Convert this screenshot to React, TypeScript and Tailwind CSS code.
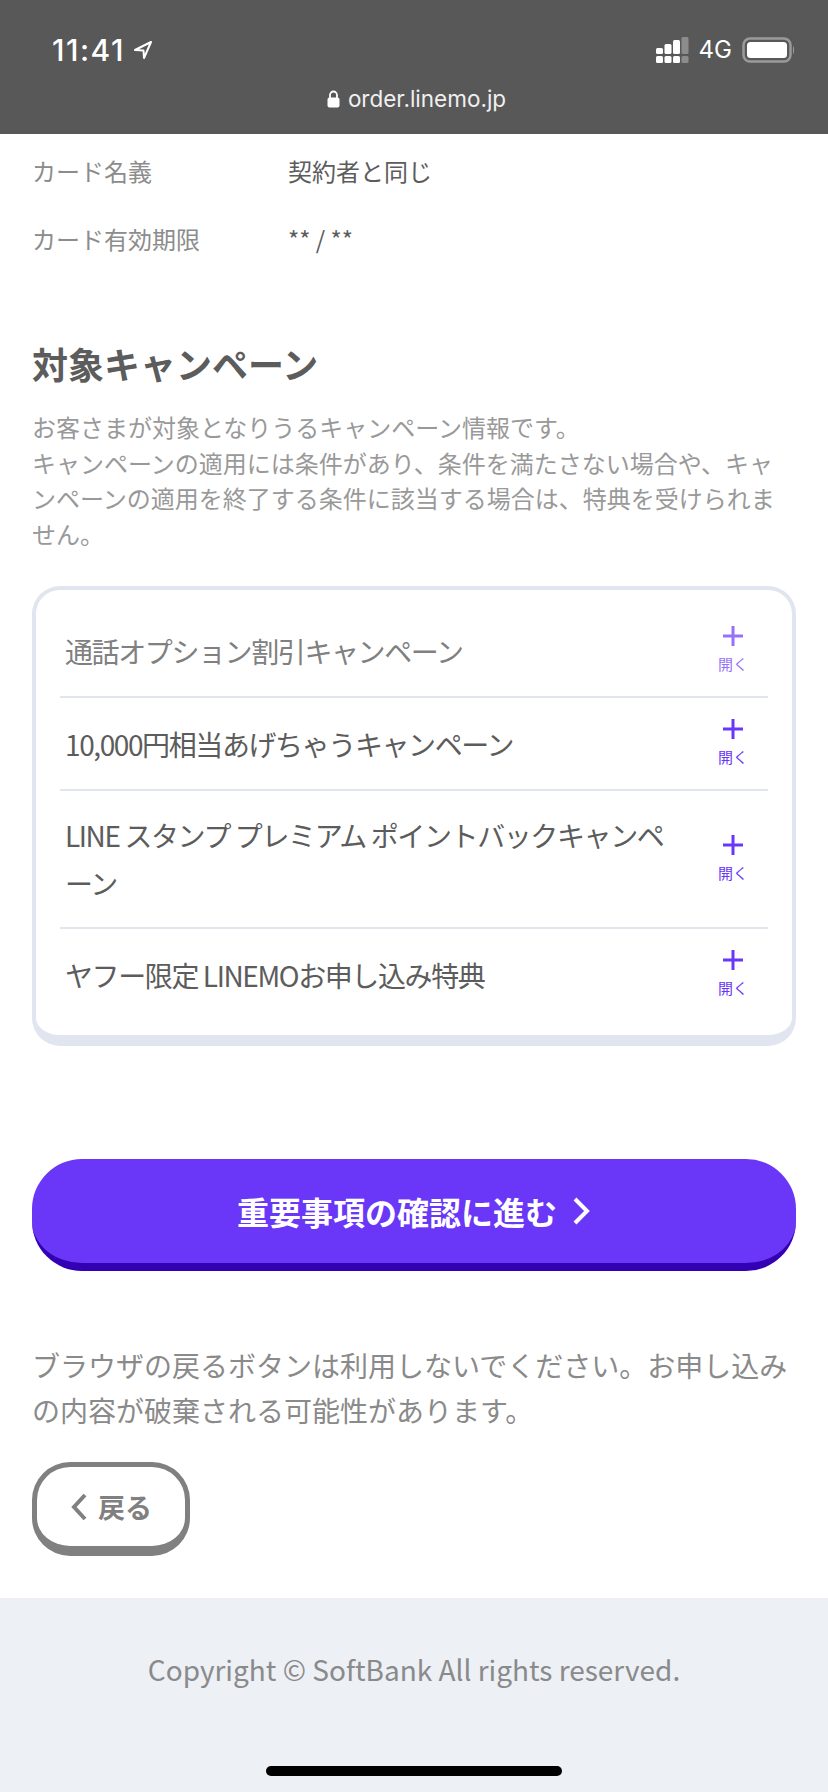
const font = "font-['Noto_Sans_CJK_JP','Noto_Sans',sans-serif]";

const campaigns = [
  { id: 1, name: "通話オプション割引キャンペーン", faded: true },
  { id: 2, name: "10,000円相当あげちゃうキャンペーン" },
  { id: 3, name: "LINE スタンプ プレミアム ポイントバックキャンペーン" },
  { id: 4, name: "ヤフー限定 LINEMOお申し込み特典" },
];

function StatusBar() {
  return (
    <div className="bg-[#585858] h-[134px] text-white flex flex-col">
      <div className="flex items-center justify-between pt-[33px] pl-[52px] pr-[33px] h-[66px]">
        <div className="flex items-center gap-[8px]">
          <span className="font-['Inter',sans-serif] text-[30px] font-medium leading-[34px] tracking-[1.5px]">11:41</span>
          <svg width="20" height="20" viewBox="0 0 20 20" fill="none" stroke="white" strokeWidth="2" strokeLinejoin="round">
            <path d="M18 2 L2 10 L10.5 10.5 L11 18 Z" />
          </svg>
        </div>
        <div className="flex items-center gap-[10px]">
          <svg width="33" height="26" viewBox="0 0 33 26" fill="white">
            <rect x="0" y="11" width="7" height="6" rx="1.5" />
            <rect x="8.5" y="7" width="7" height="10" rx="1.5" />
            <rect x="17" y="3" width="7" height="14" rx="1.5" />
            <rect x="25.5" y="0" width="7" height="17" rx="1.5" fill="#8c8c8c" />
            <rect x="0" y="19" width="7" height="7" rx="1.5" />
            <rect x="8.5" y="19" width="7" height="7" rx="1.5" />
            <rect x="17" y="19" width="7" height="7" rx="1.5" />
            <rect x="25.5" y="19" width="7" height="7" rx="1.5" fill="#8c8c8c" />
          </svg>
          <span className="font-['Inter',sans-serif] text-[24px] leading-[26px]">4G</span>
          <svg width="53" height="26" viewBox="0 0 53 26">
            <rect x="1.5" y="1.5" width="47" height="23" rx="6.5" fill="none" stroke="#9a9a9a" strokeWidth="2.5" />
            <rect x="5" y="5" width="40" height="16" rx="3.5" fill="white" />
            <path d="M51 9 C52.5 10 52.5 16 51 17 Z" fill="#9a9a9a" />
          </svg>
        </div>
      </div>
      <div className="flex items-center justify-center gap-[8px] mt-[18px] pl-[5px]">
        <svg width="13" height="18" viewBox="0 0 13 18" fill="white">
          <path d="M3 8 V5 a3.5 3.5 0 0 1 7 0 V8" fill="none" stroke="white" strokeWidth="1.8" />
          <rect x="0.5" y="7.5" width="12" height="10" rx="2" />
        </svg>
        <span className="font-['Inter',sans-serif] text-[22.5px] leading-[30px] text-[#f0f0f0]">order.linemo.jp</span>
      </div>
    </div>
  );
}

function CampaignRow({ name, faded }: { name: string; faded?: boolean }) {
  return (
    <div className="flex items-center justify-between border-b-2 border-[#e1e5ee] last:border-b-0 pl-[5px] pr-[20px] py-[20px]">
      <p className={`w-[610px] text-[28px] leading-[48px] tracking-[-1.4px] ${faded ? "text-[#808080]" : "text-[#5c5c5c]"}`}>{name}</p>
      <div className={`flex flex-col items-center text-[#6a36f8] ${faded ? "opacity-70" : ""}`}>
        <svg width="20" height="20" viewBox="0 0 20 20" stroke="currentColor" strokeWidth="3" className="mt-[1px]">
          <path d="M10 0 V20 M0 10 H20" />
        </svg>
        <span className="text-[15px] leading-[22px] mt-[7px] mb-[1px]">開く</span>
      </div>
    </div>
  );
}

export default function App() {
  return (
    <div className={`w-[828px] h-[1792px] bg-white relative overflow-hidden ${font}`}>
      <StatusBar />

      <div className="px-[32px]">
        <div className="flex pt-[18px] text-[24px] leading-[38px]">
          <span className="w-[256px] text-[#8c8c8c]">カード名義</span>
          <span className="text-[#5c5c5c]">契約者と同じ</span>
        </div>
        <div className="flex pt-[30px] text-[24px] leading-[38px]">
          <span className="w-[256px] text-[#8c8c8c]">カード有効期限</span>
          <span className="text-[#5c5c5c]">** / **</span>
        </div>

        <h2 className="mt-[80px] text-[36px] leading-[50px] font-bold text-[#5c5c5c]">対象キャンペーン</h2>
        <p className="mt-[21px] text-[24px] leading-[35.5px] text-[#999999]">
          お客さまが対象となりうるキャンペーン情報です。
          <br />
          キャンペーンの適用には条件があり、条件を満たさない場合や、キャンペーンの適用を終了する条件に該当する場合は、特典を受けられません。
        </p>

        <div className="mt-[35px] rounded-[28px] border-[4px] border-b-[11px] border-[#e1e5f0] px-[24px] py-[15px]">
          {campaigns.map((c) => (
            <CampaignRow key={c.id} name={c.name} faded={c.faded} />
          ))}
        </div>

        <button className="mt-[113px] w-full h-[112px] rounded-[50px] border-b-[8px] border-[#3300b3] bg-[#6a36f8] text-white flex items-center justify-center gap-[14px]">
          <span className="text-[32px] leading-[44px] font-bold">重要事項の確認に進む</span>
          <svg width="20" height="28" viewBox="0 0 20 28" fill="none" stroke="white" strokeWidth="4">
            <path d="M4 2 L16 14 L4 26" />
          </svg>
        </button>

        <p className="mt-[72px] text-[28px] leading-[44.5px] text-[#8a8a8a]">
          ブラウザの戻るボタンは利用しないでください。お申し込みの内容が破棄される可能性があります。
        </p>

        <button className="mt-[30px] w-[158px] h-[94px] rounded-[38px] border-[5px] border-b-[10px] border-[#808080] bg-white flex items-center justify-center gap-[10px]">
          <svg width="18" height="28" viewBox="0 0 18 28" fill="none" stroke="#808080" strokeWidth="4">
            <path d="M15 2 L4 14 L15 26" />
          </svg>
          <span className="text-[27px] leading-[40px] font-bold text-[#808080]">戻る</span>
        </button>
      </div>

      <div className="absolute bottom-0 left-0 right-0 h-[194px] bg-[#edf0f5] pt-[46px] text-center text-[28px] leading-[50px] text-[#8a8a8a]">
        Copyright © SoftBank All rights reserved.
      </div>
      <div className="absolute bottom-[16px] left-[266px] w-[296px] h-[10px] rounded-full bg-black" />
    </div>
  );
}
